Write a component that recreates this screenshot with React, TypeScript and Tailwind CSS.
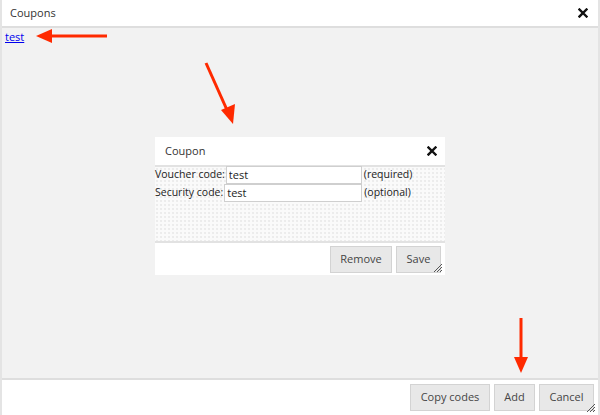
import React from "react";

function CloseIcon() {
  return (
    <svg width="10" height="10" viewBox="0 0 10 10" className="block">
      <path d="M1.5 1.5 L8.5 8.5 M8.5 1.5 L1.5 8.5" stroke="#111" strokeWidth="2.4" strokeLinecap="square" />
    </svg>
  );
}

function Grip() {
  return (
    <svg width="11" height="11" viewBox="0 0 11 11" className="absolute right-0.5 bottom-0.5">
      <path d="M10 2 L2 10 M10 5 L5 10 M10 8 L8 10" stroke="#555" strokeWidth="1" />
    </svg>
  );
}

function Btn({ children, className = "" }: { children: React.ReactNode; className?: string }) {
  return (
    <button className={"h-[27px] whitespace-nowrap bg-[#e8e8e8] border border-[#d3d3d3] text-[11px] text-[#454545] " + className}>
      {children}
    </button>
  );
}

export default function App() {
  return (
    <div
      className="relative w-[600px] h-[415px] bg-white overflow-hidden text-[11px] text-[#333]"
      style={{ fontFamily: '"Open Sans", "DejaVu Sans", sans-serif' }}
    >
      <div className="flex flex-col h-full border-l-2 border-r-2 border-[#e4e4e4]">
        {/* title */}
        <div className="h-[28px] flex items-center justify-between pl-2 pr-2.5 border-b-2 border-[#dedede] shrink-0">
          <span className="text-[11px] text-[#333]">Coupons</span>
          <CloseIcon />
        </div>

        {/* content */}
        <div className="flex-1 bg-[#f2f2f2] relative">
          <a href="#" className="absolute left-[3px] top-px text-[#0000ee] underline text-[11px]">test</a>

          {/* inner dialog */}
          <div className="absolute left-[153px] top-[109px] w-[290px] bg-white flex flex-col">
            <div className="h-[30px] flex items-center justify-between pl-2.5 pr-2 border-b-2 border-[#e2e2e2]">
              <span className="text-[11px]">Coupon</span>
              <CloseIcon />
            </div>
            <div className="h-[74px] bg-[#fafafa] bg-[radial-gradient(#ebebeb_0.7px,transparent_0.8px)] bg-[length:4px_4px] flex flex-col text-[10.5px] text-[#222]">
              <div className="flex items-center h-[17px] -mt-px">
                <span>Voucher code:</span>
                <input
                  readOnly
                  value="test"
                  className="ml-px w-[136px] h-[18px] border border-[#cfcfcf] bg-white px-0.5 text-[11px] text-[#222] outline-none"
                />
                <span className="ml-0.5">(required)</span>
              </div>
              <div className="flex items-center h-[17px] mt-px">
                <span>Security code:</span>
                <input
                  readOnly
                  value="test"
                  className="ml-px w-[138px] h-[18px] border border-[#cfcfcf] bg-white px-0.5 text-[11px] text-[#222] outline-none"
                />
                <span className="ml-0.5">(optional)</span>
              </div>
            </div>
            <div className="relative h-[34px] border-t-2 border-[#e2e2e2] flex items-center justify-end gap-1 pr-1">
              <Btn className="w-[62px]">Remove</Btn>
              <Btn className="w-[45px]">Save</Btn>
              <Grip />
            </div>
          </div>
        </div>

        {/* footer */}
        <div className="relative h-[37px] border-t-2 border-[#dedede] flex items-center justify-end gap-1 pr-1 shrink-0">
          <Btn className="w-[80px]">Copy codes</Btn>
          <Btn className="w-[41px]">Add</Btn>
          <Btn className="w-[55px]">Cancel</Btn>
          <Grip />
        </div>
      </div>

      {/* annotation arrows */}
      <svg className="absolute inset-0 pointer-events-none" width="600" height="415" viewBox="0 0 600 415">
        <g fill="#ff2a00" stroke="#ff2a00">
          <line x1="107" y1="36" x2="48" y2="36" strokeWidth="3" />
          <polygon points="36,36 52,29 52,43" stroke="none" />
          <line x1="206" y1="63" x2="227" y2="110" strokeWidth="3" />
          <polygon points="233,124 221,110 235,104" stroke="none" />
          <line x1="521" y1="318" x2="521" y2="360" strokeWidth="3" />
          <polygon points="521,373 514,357 528,357" stroke="none" />
        </g>
      </svg>
    </div>
  );
}
